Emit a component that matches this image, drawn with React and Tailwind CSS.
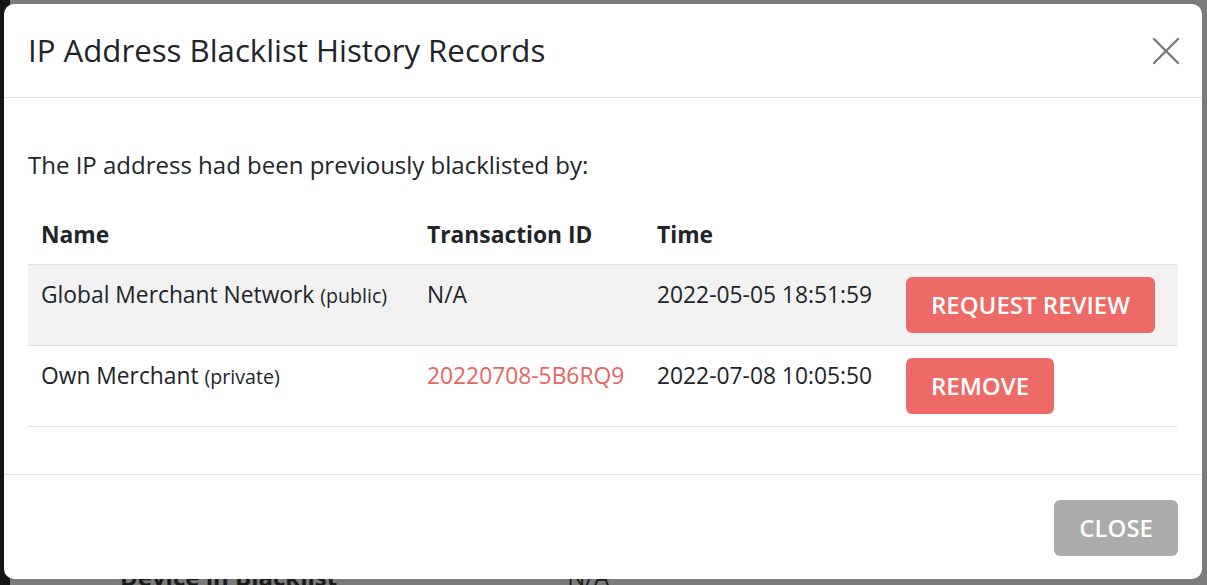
import { X } from 'lucide-react';

const ROWS = [
  {
    name: 'Global Merchant Network',
    scope: 'public',
    txn: null,
    time: '2022-05-05 18:51:59',
    action: 'REQUEST REVIEW',
    striped: true,
  },
  {
    name: 'Own Merchant',
    scope: 'private',
    txn: '20220708-5B6RQ9',
    time: '2022-07-08 10:05:50',
    action: 'REMOVE',
    striped: false,
  },
];

function Backdrop() {
  // Dimmed page behind the modal — only slivers peek out at the edges.
  return (
    <div className="absolute inset-0 flex bg-[#7b7b7b]">
      <div className="w-[10px] bg-[#151515]" />
      <div className="flex-1 flex flex-col justify-between overflow-hidden">
        <div className="flex flex-col items-end -mr-[14px] pt-[100px] text-[24px] leading-[36px] text-[#1a1a1a]">
          <span className="font-bold">s</span>
          <span className="mt-[20px]">r</span>
        </div>
        <div className="flex items-start h-[8px] overflow-hidden pl-[110px] text-[24px] font-bold leading-none text-[#1a1a1a]">
          <span className="-mt-[12px]">Device in Blacklist</span>
          <span className="-mt-[12px] ml-[230px] font-normal">N/A</span>
        </div>
      </div>
    </div>
  );
}

export default function App() {
  return (
    <div
      className="relative h-[585px] w-full overflow-hidden"
      style={{ fontFamily: '"Open Sans", "Noto Sans", sans-serif' }}
    >
      <Backdrop />

      {/* Modal */}
      <div className="absolute left-[4px] top-[4px] w-[1198px] h-[575px] flex flex-col rounded-[10px] bg-white text-[#212529]">
        <div className="flex items-center justify-between h-[94px] px-[24px] border-b border-[#dee2e6]">
          <h2 className="text-[31.2px] font-medium leading-none">IP Address Blacklist History Records</h2>
          <button className="text-[#7a7a7a] -mr-[12px]">
            <X className="w-[48px] h-[48px]" strokeWidth={1.2} />
          </button>
        </div>

        <div className="flex-1 px-[24px] pt-[49px]">
          <p className="text-[24px] leading-[36px] mb-[18px]">The IP address had been previously blacklisted by:</p>

          <table className="w-full table-fixed text-[22.8px] leading-[36px] border-collapse whitespace-nowrap">
            <thead>
              <tr className="border-b border-[#dee2e6] text-left">
                <th className="w-[386px] px-[13px] pt-[16px] pb-[11px] font-bold">Name</th>
                <th className="w-[230px] px-[13px] pt-[16px] pb-[11px] font-bold">Transaction ID</th>
                <th className="w-[249px] px-[13px] pt-[16px] pb-[11px] font-bold">Time</th>
                <th className="px-[13px] pt-[16px] pb-[11px]" />
              </tr>
            </thead>
            <tbody>
              {ROWS.map((r) => (
                <tr key={r.name} className={['border-b border-[#dee2e6] align-top', r.striped ? 'bg-[#f2f2f2]' : ''].join(' ')}>
                  <td className="px-[13px] py-[12px]">
                    {r.name} <span className="text-[19.6px]">({r.scope})</span>
                  </td>
                  <td className="px-[13px] py-[12px]">
                    {r.txn ? <span className="text-[#e86561]">{r.txn}</span> : 'N/A'}
                  </td>
                  <td className="px-[13px] py-[12px]">{r.time}</td>
                  <td className="px-[13px] py-[12px]">
                    <button className="h-[56px] px-[25px] rounded-[6px] bg-[#ee6a66] text-white text-[24px] font-semibold leading-none">
                      {r.action}
                    </button>
                  </td>
                </tr>
              ))}
            </tbody>
          </table>
        </div>

        <div className="flex justify-end px-[24px] pt-[25px] pb-[23px] border-t border-[#dee2e6]">
          <button className="h-[56px] px-[25px] rounded-[6px] bg-[#ababab] text-white text-[24px] font-semibold leading-none">
            CLOSE
          </button>
        </div>
      </div>
    </div>
  );
}
